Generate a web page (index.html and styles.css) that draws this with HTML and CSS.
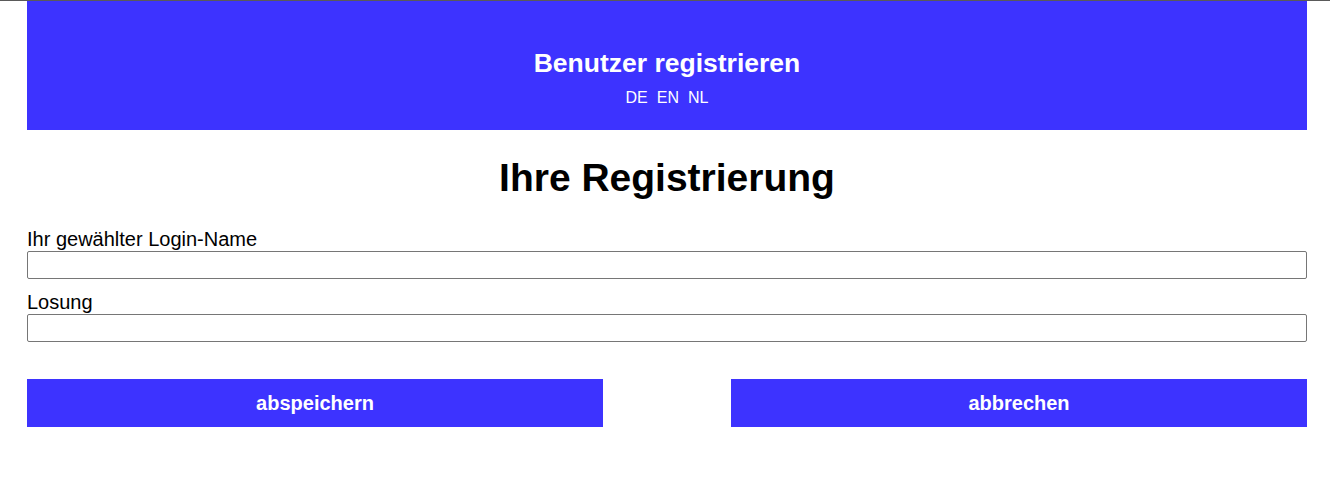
FILE: index.html
```html
<!DOCTYPE html>
<html lang="de">
<head>
<meta charset="utf-8">
<title>Benutzer registrieren</title>
<link rel="stylesheet" href="styles.css">
</head>
<body>
<div class="topline"></div>
<div class="page">
  <header class="header">
    <h1 class="header-title">Benutzer registrieren</h1>
    <nav class="langs">
      <a class="lang" href="#">DE</a>
      <a class="lang" href="#">EN</a>
      <a class="lang" href="#">NL</a>
    </nav>
  </header>
  <main class="main">
    <h2 class="form-title">Ihre Registrierung</h2>
    <form class="form">
      <label class="field">
        <span class="label">Ihr gewählter Login-Name</span>
        <input class="input" type="text">
      </label>
      <label class="field">
        <span class="label">Losung</span>
        <input class="input" type="password">
      </label>
      <div class="actions">
        <button class="btn" type="button">abspeichern</button>
        <button class="btn" type="button">abbrechen</button>
      </div>
    </form>
  </main>
</div>
</body>
</html>
```
FILE: styles.css
```css
html, body {
  margin: 0;
  padding: 0;
  background: #fff;
  font-family: "Liberation Sans", Arial, sans-serif;
  color: #000;
}
.topline {
  height: 1px;
  background: #5a5a5a;
}
.page {
  width: 1280px;
  margin-left: 27px;
}
.header {
  background: #3d33ff;
  height: 129px;
  display: flex;
  flex-direction: column;
  align-items: center;
  color: #fff;
  padding-top: 47px;
  box-sizing: border-box;
}
.header-title {
  margin: 0;
  font-size: 26.5px;
  line-height: 30px;
  font-weight: bold;
}
.langs {
  margin-top: 11px;
  display: flex;
  gap: 9px;
  font-size: 16px;
  line-height: 18px;
}
.lang {
  color: #fff;
  text-decoration: none;
}
.main {
  padding-top: 25px;
}
.form-title {
  margin: 0;
  text-align: center;
  font-size: 39px;
  line-height: 46px;
  font-weight: bold;
}
.form {
  margin-top: 27px;
  display: flex;
  flex-direction: column;
}
.field {
  display: flex;
  flex-direction: column;
  margin-bottom: 12px;
}
.label {
  font-size: 20px;
  line-height: 23px;
}
.input {
  margin: 0;
  height: 28px;
  box-sizing: border-box;
  border: 1px solid #767676;
  border-radius: 2px;
  padding: 1px 2px;
  font-size: 16px;
}
.actions {
  margin-top: 25px;
  display: flex;
  justify-content: space-between;
}
.btn {
  width: 576px;
  height: 48px;
  border: none;
  background: #3d33ff;
  color: #fff;
  font-family: "Liberation Sans", Arial, sans-serif;
  font-weight: bold;
  font-size: 20px;
  cursor: pointer;
}
```
